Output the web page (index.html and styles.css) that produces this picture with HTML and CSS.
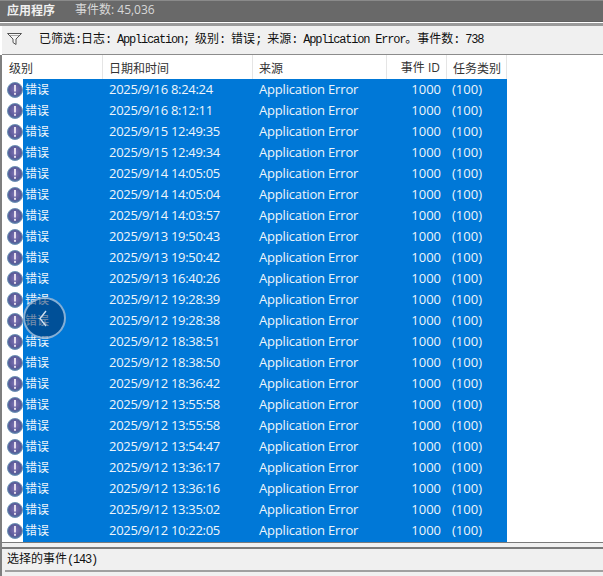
FILE: index.html
```html
<!DOCTYPE html>
<html lang="zh-CN">
<head>
<meta charset="utf-8">
<title>应用程序</title>
<link rel="stylesheet" href="styles.css">
</head>
<body>
<svg class="defs" width="0" height="0" aria-hidden="true">
  <defs>
    <radialGradient id="orb" cx="50%" cy="45%" r="60%">
      <stop offset="0" stop-color="#7f74b4"/>
      <stop offset="0.65" stop-color="#5a5a98"/>
      <stop offset="1" stop-color="#4f7ba6"/>
    </radialGradient>
    <symbol id="err" viewBox="0 0 16 16">
      <circle cx="8" cy="8" r="7.5" fill="url(#orb)" stroke="#6f93b5" stroke-width="1"/>
      <rect x="7" y="3" width="2" height="6.5" fill="#e4dcec"/>
      <rect x="7" y="10.8" width="2" height="2" fill="#e4dcec"/>
    </symbol>
  </defs>
</svg>
<header class="titlebar">
  <span class="title">应用程序</span>
  <span class="count">事件数: 45,036</span>
</header>
<div class="rule-top"></div>
<section class="filter">
  <svg class="funnel" width="15" height="12" viewBox="0 0 15 12">
    <path d="M0.5 0.5H14.5L9 6V11.5L6 9.5V6Z" fill="#f6f6f6" stroke="#555" stroke-width="1"/>
    <path d="M3 2.5H12" stroke="#a8a8a8" stroke-width="1"/>
  </svg>
  <span class="filter-text">已筛选<span class="mono">:</span>日志<span class="mono">: Application; </span>级别<span class="mono">: </span>错误<span class="mono">; </span>来源<span class="mono">: Application Error</span>。事件数<span class="mono">: 738</span></span>
</section>
<main class="table">
  <div class="head">
    <div class="h c-level">级别</div>
    <div class="h c-date">日期和时间</div>
    <div class="h c-src">来源</div>
    <div class="h c-id">事件 ID</div>
    <div class="h c-task">任务类别</div>
  </div>
  <div class="rows" id="rows">
    <div class="row"><svg class="ico"><use href="#err"/></svg><div class="sel"><span class="c-level">错误</span><span class="c-date">2025/9/16 8:24:24</span><span class="c-src">Application Error</span><span class="c-id">1000</span><span class="c-task">(100)</span></div></div>
    <div class="row"><svg class="ico"><use href="#err"/></svg><div class="sel"><span class="c-level">错误</span><span class="c-date">2025/9/16 8:12:11</span><span class="c-src">Application Error</span><span class="c-id">1000</span><span class="c-task">(100)</span></div></div>
    <div class="row"><svg class="ico"><use href="#err"/></svg><div class="sel"><span class="c-level">错误</span><span class="c-date">2025/9/15 12:49:35</span><span class="c-src">Application Error</span><span class="c-id">1000</span><span class="c-task">(100)</span></div></div>
    <div class="row"><svg class="ico"><use href="#err"/></svg><div class="sel"><span class="c-level">错误</span><span class="c-date">2025/9/15 12:49:34</span><span class="c-src">Application Error</span><span class="c-id">1000</span><span class="c-task">(100)</span></div></div>
    <div class="row"><svg class="ico"><use href="#err"/></svg><div class="sel"><span class="c-level">错误</span><span class="c-date">2025/9/14 14:05:05</span><span class="c-src">Application Error</span><span class="c-id">1000</span><span class="c-task">(100)</span></div></div>
    <div class="row"><svg class="ico"><use href="#err"/></svg><div class="sel"><span class="c-level">错误</span><span class="c-date">2025/9/14 14:05:04</span><span class="c-src">Application Error</span><span class="c-id">1000</span><span class="c-task">(100)</span></div></div>
    <div class="row"><svg class="ico"><use href="#err"/></svg><div class="sel"><span class="c-level">错误</span><span class="c-date">2025/9/14 14:03:57</span><span class="c-src">Application Error</span><span class="c-id">1000</span><span class="c-task">(100)</span></div></div>
    <div class="row"><svg class="ico"><use href="#err"/></svg><div class="sel"><span class="c-level">错误</span><span class="c-date">2025/9/13 19:50:43</span><span class="c-src">Application Error</span><span class="c-id">1000</span><span class="c-task">(100)</span></div></div>
    <div class="row"><svg class="ico"><use href="#err"/></svg><div class="sel"><span class="c-level">错误</span><span class="c-date">2025/9/13 19:50:42</span><span class="c-src">Application Error</span><span class="c-id">1000</span><span class="c-task">(100)</span></div></div>
    <div class="row"><svg class="ico"><use href="#err"/></svg><div class="sel"><span class="c-level">错误</span><span class="c-date">2025/9/13 16:40:26</span><span class="c-src">Application Error</span><span class="c-id">1000</span><span class="c-task">(100)</span></div></div>
    <div class="row"><svg class="ico"><use href="#err"/></svg><div class="sel"><span class="c-level">错误</span><span class="c-date">2025/9/12 19:28:39</span><span class="c-src">Application Error</span><span class="c-id">1000</span><span class="c-task">(100)</span></div></div>
    <div class="row"><svg class="ico"><use href="#err"/></svg><div class="sel"><span class="c-level">错误</span><span class="c-date">2025/9/12 19:28:38</span><span class="c-src">Application Error</span><span class="c-id">1000</span><span class="c-task">(100)</span></div></div>
    <div class="row"><svg class="ico"><use href="#err"/></svg><div class="sel"><span class="c-level">错误</span><span class="c-date">2025/9/12 18:38:51</span><span class="c-src">Application Error</span><span class="c-id">1000</span><span class="c-task">(100)</span></div></div>
    <div class="row"><svg class="ico"><use href="#err"/></svg><div class="sel"><span class="c-level">错误</span><span class="c-date">2025/9/12 18:38:50</span><span class="c-src">Application Error</span><span class="c-id">1000</span><span class="c-task">(100)</span></div></div>
    <div class="row"><svg class="ico"><use href="#err"/></svg><div class="sel"><span class="c-level">错误</span><span class="c-date">2025/9/12 18:36:42</span><span class="c-src">Application Error</span><span class="c-id">1000</span><span class="c-task">(100)</span></div></div>
    <div class="row"><svg class="ico"><use href="#err"/></svg><div class="sel"><span class="c-level">错误</span><span class="c-date">2025/9/12 13:55:58</span><span class="c-src">Application Error</span><span class="c-id">1000</span><span class="c-task">(100)</span></div></div>
    <div class="row"><svg class="ico"><use href="#err"/></svg><div class="sel"><span class="c-level">错误</span><span class="c-date">2025/9/12 13:55:58</span><span class="c-src">Application Error</span><span class="c-id">1000</span><span class="c-task">(100)</span></div></div>
    <div class="row"><svg class="ico"><use href="#err"/></svg><div class="sel"><span class="c-level">错误</span><span class="c-date">2025/9/12 13:54:47</span><span class="c-src">Application Error</span><span class="c-id">1000</span><span class="c-task">(100)</span></div></div>
    <div class="row"><svg class="ico"><use href="#err"/></svg><div class="sel"><span class="c-level">错误</span><span class="c-date">2025/9/12 13:36:17</span><span class="c-src">Application Error</span><span class="c-id">1000</span><span class="c-task">(100)</span></div></div>
    <div class="row"><svg class="ico"><use href="#err"/></svg><div class="sel"><span class="c-level">错误</span><span class="c-date">2025/9/12 13:36:16</span><span class="c-src">Application Error</span><span class="c-id">1000</span><span class="c-task">(100)</span></div></div>
    <div class="row"><svg class="ico"><use href="#err"/></svg><div class="sel"><span class="c-level">错误</span><span class="c-date">2025/9/12 13:35:02</span><span class="c-src">Application Error</span><span class="c-id">1000</span><span class="c-task">(100)</span></div></div>
    <div class="row"><svg class="ico"><use href="#err"/></svg><div class="sel"><span class="c-level">错误</span><span class="c-date">2025/9/12 10:22:05</span><span class="c-src">Application Error</span><span class="c-id">1000</span><span class="c-task">(100)</span></div></div>
  </div>
</main>
<footer class="footer">
  <div class="footer-gap"></div>
  <div class="footer-text">选择的事件<span class="mono">(143)</span></div>
</footer>
<div class="back">
  <svg class="chev" width="8" height="17" viewBox="0 0 8 17"><path d="M7 1L1 8.5L7 16" fill="none" stroke="#cfe0f2" stroke-width="1.4"/></svg>
</div>
</body>
</html>
```
FILE: styles.css
```css
* { box-sizing: border-box; }
html, body { margin: 0; padding: 0; }
body {
  width: 603px;
  height: 576px;
  overflow: hidden;
  background: #fff;
  position: relative;
  font-family: "Open Sans", "Noto Sans CJK SC", sans-serif;
  font-size: 13px;
}
.defs { position: absolute; }
.titlebar {
  height: 22px;
  background: #696969;
  border-top: 1px solid #8a8a8a;
  border-bottom: 1px solid #5f5f5f;
  display: flex;
  align-items: center;
  padding: 0 0 3px 7px;
  font-family: "Noto Sans CJK SC", sans-serif;
  font-size: 12px;
  line-height: 18px;
  color: #f0f0f0;
}
.title { font-weight: 700; width: 68px; }
.count { color: #d8d8d8; font-family: "Open Sans", "Noto Sans CJK SC", sans-serif; }
.rule-top {
  height: 4px;
  background: #fff;
  border-bottom: 3px solid #9a9a9a;
}
.filter {
  height: 29px;
  margin-left: 2px;
  background: #f0f0f0;
  border-bottom: 1px solid #8c8c8c;
  display: flex;
  align-items: center;
  padding: 0 0 3px 5px;
  color: #111;
}
.funnel { flex: none; margin-right: 17px; }
.filter-text {
  font-family: "Noto Sans CJK SC", sans-serif;
  font-size: 12px;
  line-height: 18px;
  white-space: pre;
}
.mono {
  font-family: "Liberation Mono", monospace;
  font-size: 12px;
  letter-spacing: -1.2px;
}
.table {
  height: 488px;
  border-left: 2px solid #7f7f7f;
  background: #fff;
  border-bottom: 1px solid #7a7a7a;
}
.head {
  display: flex;
  height: 24px;
  color: #333;
  align-items: stretch;
  font-family: "Noto Sans CJK SC", "Open Sans", sans-serif;
  font-size: 12px;
}
.h {
  display: flex;
  align-items: center;
  border-right: 1px solid #e5e5e5;
}
.head .c-level { width: 101px; padding-left: 7px; }
.head .c-date { width: 150px; padding-left: 6px; }
.head .c-src { width: 134px; padding-left: 6px; }
.head .c-id { width: 60px; justify-content: flex-end; padding-right: 6px; font-family: "Open Sans", "Noto Sans CJK SC", sans-serif; }
.head .c-task { width: 60px; padding-left: 6px; }
.row {
  height: 21px;
  display: flex;
  align-items: center;
}
.row:last-child { height: 22px; }
.ico {
  width: 16px;
  height: 16px;
  flex: none;
  margin: 0 0 0 5px;
}
.sel {
  width: 484px;
  height: 100%;
  background: #0078d7;
  color: #eef5fb;
  display: flex;
  align-items: center;
  padding-bottom: 2px;
  white-space: nowrap;
}
.row:last-child .sel { padding-bottom: 3px; }
.sel .c-level { width: 86px; padding-left: 2px; font-family: "Noto Sans CJK SC", sans-serif; font-size: 12px; }
.sel .c-date { width: 150px; letter-spacing: -0.3px; }
.sel .c-src { width: 128px; letter-spacing: -0.18px; }
.sel .c-id { width: 54px; text-align: right; }
.sel .c-task { width: 60px; padding-left: 11px; }
.footer {
  height: 33px;
  background: #f0f0f0;
  border-left: 2px solid #7f7f7f;
}
.footer-gap {
  height: 6px;
  border-bottom: 2px solid #7a7a7a;
}
.footer-text {
  height: 23px;
  line-height: 18px;
  margin-left: 3px;
  padding-left: 2px;
  font-family: "Noto Sans CJK SC", sans-serif;
  font-size: 12px;
  color: #111;
  border-bottom: 2px solid #a0a0a0;
}
.back {
  position: absolute;
  left: 23px;
  top: 297px;
  width: 43px;
  height: 42px;
  padding-right: 4px;
  border-radius: 50%;
  background: rgba(0, 40, 90, 0.5);
  border: 2px solid rgba(190, 215, 240, 0.7);
  display: flex;
  align-items: center;
  justify-content: center;
}
```
